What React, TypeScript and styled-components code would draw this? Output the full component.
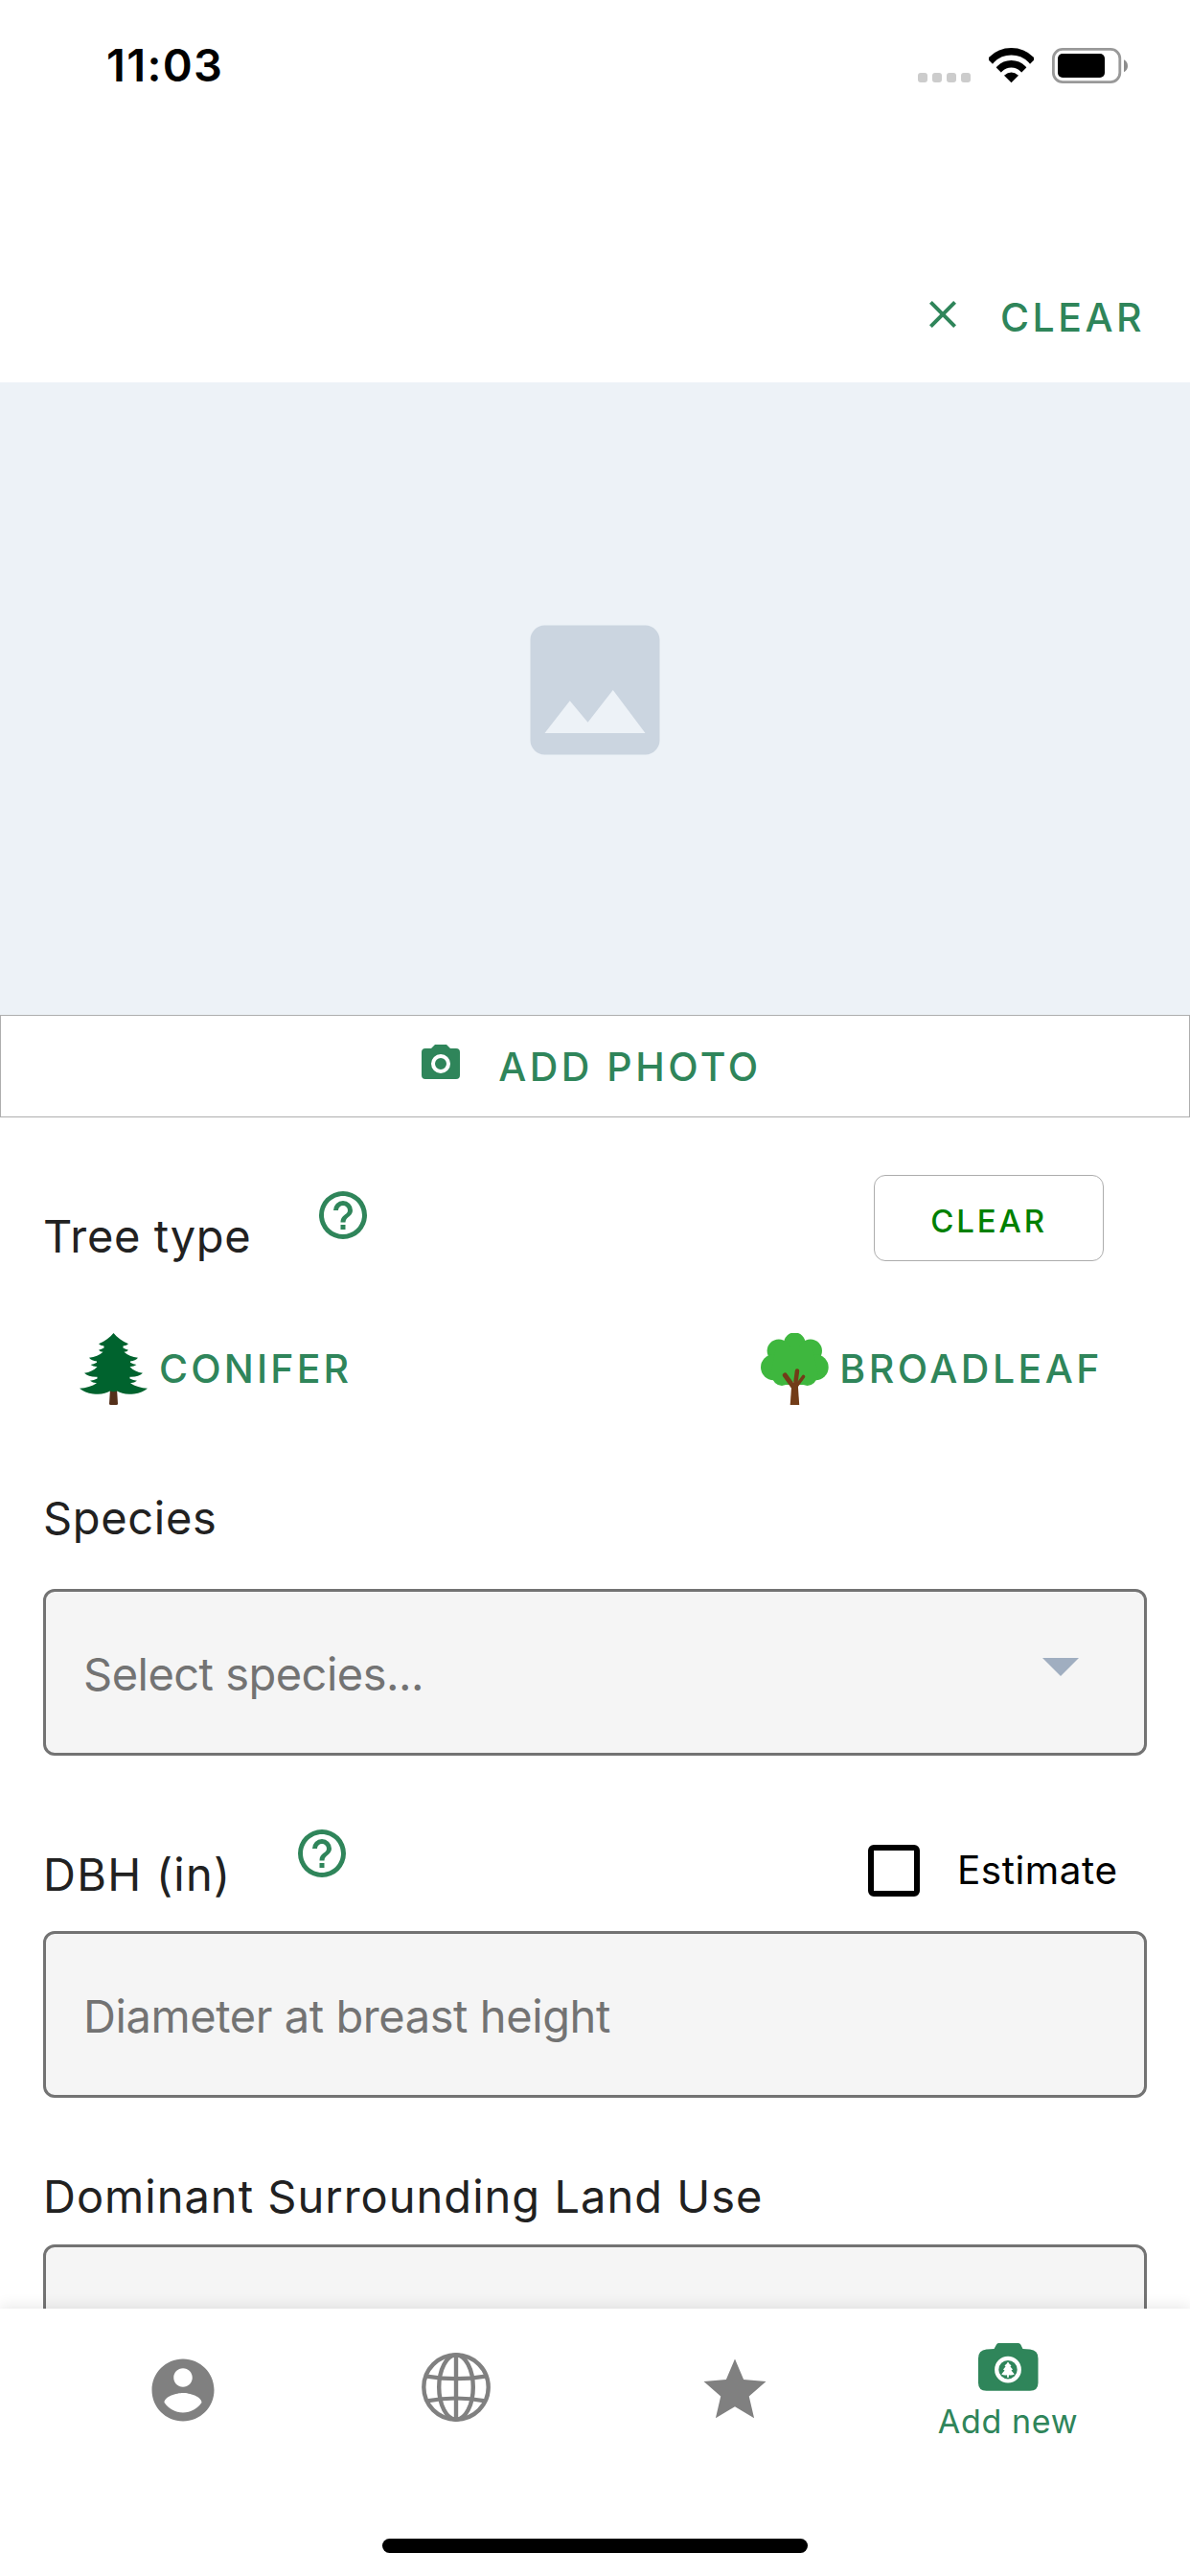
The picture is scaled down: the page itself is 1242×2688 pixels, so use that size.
import React from "react";
import styled, { createGlobalStyle } from "styled-components";

const green = "#2F855A";

const GlobalStyle = createGlobalStyle`
  * { box-sizing: border-box; }
  body {
    margin: 0;
    background: #fff;
    font-family: "Inter", "Liberation Sans", sans-serif;
  }
  svg { display: block; flex: none; }
`;

const Screen = styled.div`
  width: 1242px;
  height: 2688px;
  display: flex;
  flex-direction: column;
  background: #fff;
  overflow: hidden;
`;

const Content = styled.main`
  height: 2409px;
  flex: none;
  overflow: hidden;
`;

const StatusBar = styled.header`
  height: 136px;
  padding: 0 65px 0 111px;
  display: flex;
  justify-content: space-between;
  align-items: center;
`;

const Time = styled.span`
  font-size: 47px;
  font-weight: 600;
  line-height: 60px;
  letter-spacing: 1.32px;
  color: #000;
`;

const StatusIcons = styled.div`
  display: flex;
  align-items: flex-end;
  gap: 19px;
`;

const Signal = styled.div`
  display: flex;
  gap: 5px;
`;

const SignalDot = styled.span`
  width: 10px;
  height: 10px;
  margin-bottom: 1px;
  border-radius: 3px;
  background: #ccc;
`;

const TopBar = styled.div`
  height: 263px;
  padding: 168px 47px 0 0;
  display: flex;
  justify-content: flex-end;
  align-items: flex-start;
`;

const TextButton = styled.button<{ $gap?: number }>`
  border: 0;
  padding: 0;
  background: none;
  display: flex;
  align-items: flex-start;
  gap: ${(p) => p.$gap ?? 36}px;
  color: ${green};
  font-family: inherit;
`;

const ButtonLabel = styled.span<{ $spacing?: number }>`
  font-size: 41px;
  font-weight: 500;
  line-height: 54px;
  letter-spacing: ${(p) => p.$spacing ?? 3.48}px;
  white-space: nowrap;
`;

const PhotoPlaceholder = styled.div`
  height: 660px;
  padding: 231px 1px 0 0;
  display: flex;
  justify-content: center;
  align-items: flex-start;
  background: #edf2f7;
`;

const AddPhotoButton = styled(TextButton)`
  width: 100%;
  height: 107px;
  padding: 26px 11px 0 0;
  justify-content: center;
  border: 1px solid #aeaeae;
`;

const Form = styled.form`
  padding: 60px 45px 0;
`;

const Row = styled.div<{ $height: number; $top?: number }>`
  height: ${(p) => p.$height}px;
  margin-top: ${(p) => p.$top ?? 0}px;
  display: flex;
  align-items: flex-start;
`;

const Label = styled.label<{ $top: number; $spacing: number }>`
  display: block;
  margin-top: ${(p) => p.$top}px;
  font-size: 47px;
  line-height: 60px;
  letter-spacing: ${(p) => p.$spacing}px;
  color: #212121;
  white-space: nowrap;
`;

const TypeLabel = styled(Label)`
  width: 283px;
`;

const DbhLabel = styled(Label)`
  width: 261px;
`;

const HelpButton = styled.span<{ $top?: number }>`
  margin-top: ${(p) => p.$top ?? 0}px;
  color: ${green};
`;

const OutlineButton = styled.button`
  width: 240px;
  height: 90px;
  margin-left: auto;
  margin-right: 45px;
  padding: 6px 0 0;
  border: 1px solid #adadad;
  border-radius: 12px;
  background: none;
  color: #008000;
  font-family: inherit;
  font-size: 33px;
  font-weight: 500;
  line-height: 40px;
  letter-spacing: 2.84px;
`;

const TreeTypes = styled.div`
  height: 75px;
  margin-top: 75px;
  padding: 0 46px 0 38px;
  display: flex;
  justify-content: space-between;
`;

const TreeLabel = styled(ButtonLabel)`
  margin-top: 10px;
`;

const Field = styled.div<{ $top?: number }>`
  height: 174px;
  margin-top: ${(p) => p.$top ?? 0}px;
  padding: 0 68px 0 39px;
  display: flex;
  justify-content: space-between;
  align-items: center;
  border: 3px solid #737373;
  border-radius: 12px;
  background: #f5f5f5;
`;

const Placeholder = styled.span<{ $spacing: number }>`
  margin-top: 4px;
  font-size: 47px;
  line-height: 60px;
  letter-spacing: ${(p) => p.$spacing}px;
  color: #737373;
`;

const Chevron = styled.span`
  width: 0;
  height: 0;
  margin-bottom: 11px;
  border: 19px solid transparent;
  border-top-color: #a0aec0;
  border-bottom: 0;
`;

const Estimate = styled.label`
  margin: 21px 0 0 auto;
  width: 291px;
  display: flex;
  align-items: center;
  gap: 39px;
  font-size: 40.5px;
  line-height: 54px;
  letter-spacing: 0.52px;
  color: #000;
`;

const CheckBox = styled.span`
  width: 54px;
  height: 54px;
  flex: none;
  border: 6px solid #000;
  border-radius: 6px;
`;

const TabBar = styled.nav`
  position: relative;
  height: 279px;
  flex: none;
  display: flex;
  flex-direction: column;
  align-items: center;
  background: #fff;
  box-shadow: 0 -3px 14px rgba(0, 0, 0, 0.09);
`;

const Tabs = styled.div`
  width: 100%;
  height: 240px;
  padding-left: 48px;
  display: grid;
  grid-template-columns: 286px 284px 298px 272px;
`;

const Tab = styled.div<{ $top: number; $active?: boolean }>`
  padding-top: ${(p) => p.$top}px;
  display: flex;
  flex-direction: column;
  align-items: center;
  color: ${(p) => (p.$active ? green : "#808080")};
`;

const TabLabel = styled.span`
  margin-top: 12px;
  font-size: 34px;
  line-height: 40px;
  letter-spacing: 0.67px;
  white-space: nowrap;
`;

const HomeIndicator = styled.div`
  width: 444px;
  height: 15px;
  border-radius: 8px;
  background: #000;
`;

const Icon = ({ size, d }: { size: number; d: string }) => (
  <svg width={size} height={size} viewBox="0 0 24 24" fill="currentColor">
    <path d={d} />
  </svg>
);

const paths = {
  close:
    "M19,6.41L17.59,5L12,10.59L6.41,5L5,6.41L10.59,12L5,17.59L6.41,19L12,13.41L17.59,19L19,17.59L13.41,12L19,6.41Z",
  image:
    "M21 19V5c0-1.1-.9-2-2-2H5c-1.1 0-2 .9-2 2v14c0 1.1.9 2 2 2h14c1.1 0 2-.9 2-2zM8.5 13.5l2.5 3.01L14.5 12l4.5 6H5l3.5-4.5z",
  camera:
    "M4,4H7L9,2H15L17,4H20A2,2 0 0,1 22,6V18A2,2 0 0,1 20,20H4A2,2 0 0,1 2,18V6A2,2 0 0,1 4,4M12,7A5,5 0 0,0 7,12A5,5 0 0,0 12,17A5,5 0 0,0 17,12A5,5 0 0,0 12,7M12,9A3,3 0 0,1 15,12A3,3 0 0,1 12,15A3,3 0 0,1 9,12A3,3 0 0,1 12,9Z",
  help:
    "M11,18H13V16H11V18M12,2A10,10 0 0,0 2,12A10,10 0 0,0 12,22A10,10 0 0,0 22,12A10,10 0 0,0 12,2M12,20C7.59,20 4,16.41 4,12C4,7.59 7.59,4 12,4C16.41,4 20,7.59 20,12C20,16.41 16.41,20 12,20M12,6A4,4 0 0,0 8,10H10A2,2 0 0,1 12,8A2,2 0 0,1 14,10C14,12 11,11.75 11,15H13C13,12.75 16,12.5 16,10A4,4 0 0,0 12,6Z",
  account:
    "M12 2C6.48 2 2 6.48 2 12s4.48 10 10 10 10-4.48 10-10S17.52 2 12 2zm0 3c1.66 0 3 1.34 3 3s-1.34 3-3 3-3-1.34-3-3 1.34-3 3-3zm0 14.2c-2.5 0-4.71-1.28-6-3.22.03-1.99 4-3.08 6-3.08 1.99 0 5.97 1.09 6 3.08-1.29 1.94-3.5 3.22-6 3.22z",
  star:
    "M12,17.27L18.18,21L16.54,13.97L22,9.24L14.81,8.62L12,2L9.19,8.62L2,9.24L7.45,13.97L5.82,21L12,17.27Z",
};

const WifiIcon = () => (
  <svg width="47" height="37" viewBox="0 0 47 37">
    <defs>
      <clipPath id="wifi-fan">
        <path d="M23.5 36.2L-12 .7V-10H59V.7Z" />
      </clipPath>
    </defs>
    <g clipPath="url(#wifi-fan)" fill="none" stroke="#000">
      <circle cx="23.5" cy="33" r="29.2" strokeWidth="7.4" />
      <circle cx="23.5" cy="34" r="17.3" strokeWidth="7.4" />
      <circle cx="23.5" cy="35" r="9.6" fill="#000" stroke="none" />
    </g>
  </svg>
);

const BatteryIcon = () => (
  <svg width="79" height="37" viewBox="0 0 79 37">
    <rect x="1.4" y="1.4" width="69.4" height="34.2" rx="9.6" fill="none" stroke="#999" strokeWidth="2.8" />
    <rect x="6" y="6" width="49" height="25" rx="5" />
    <path d="M75 12.2C77.8 13.5 79 16 79 18.7S77.8 23.9 75 25.2Z" fill="#8c8c8c" />
  </svg>
);

const ConiferIcon = () => (
  <svg width="71" height="75" viewBox="0 0 71 75">
    <path d="M32 58H39L40 73.5Q40 75 38.5 75H32.5Q31 75 31 73.5Z" fill="#54301A" />
    <path
      fill="#00632E"
      d="M35.5 0C39 4.5 44.5 8.5 51 11.2Q49.5 13.2 45.5 13.6V15.6Q48 17.2 51 17.8Q49.5 19.6 46.5 19.8C50 23 55 25.2 61 25.8Q58.5 29 53 29.4V30.8Q56 32.6 59.5 33Q57 35 52.5 35.3C56 39 60.5 41 66 41.8Q61.5 46.2 52.5 45.8V47.4Q56 49.4 60 49.8Q57.5 52 53 52.3C58 55.6 64 57.4 71 57.7Q65.5 62.2 57 63.4C49 64.4 43.5 63.2 39 60.6Q35.5 61.8 32 60.6C27.5 63.2 22 64.4 14 63.4Q5.5 62.2 0 57.7C7 57.4 13 55.6 18 52.3Q13.5 52 11 49.8Q15 49.4 18.5 47.4V45.8Q9.5 46.2 5 41.8C10.5 41 15 39 18.5 35.3Q14 35 11.5 33Q15 32.6 18 30.8V29.4Q12.5 29 10 25.8C16 25.2 21 23 24.5 19.8Q21.5 19.6 20 17.8Q23 17.2 25.5 15.6V13.6Q21.5 13.2 20 11.2C26.5 8.5 32 4.5 35.5 0Z"
    />
  </svg>
);

const BroadleafIcon = () => (
  <svg width="71" height="75" viewBox="0 0 71 75">
    <g fill="#3EB73E">
      <circle cx="35.3" cy="10.6" r="11.2" />
      <circle cx="18.8" cy="18.6" r="12.2" />
      <circle cx="51.8" cy="18.6" r="12.2" />
      <circle cx="13.5" cy="35.8" r="13.5" />
      <circle cx="57.2" cy="35.8" r="13.5" />
      <circle cx="22" cy="45" r="10" />
      <circle cx="48.6" cy="45" r="10" />
      <path d="M16 14H54L60 44L50 54H40L35.3 50L30.5 54H20L10 44Z" />
    </g>
    <g fill="none" stroke="#723C18" strokeLinecap="round" strokeLinejoin="round">
      <path d="M25.3 44L34.3 56.5" strokeWidth="5" />
      <path d="M38 39.5L35.8 56" strokeWidth="4.5" />
      <path d="M44.5 45.5L36.8 56" strokeWidth="3.6" />
    </g>
    <path d="M32.2 54H38.8L40.2 75H30.7Z" fill="#723C18" />
  </svg>
);

const GlobeIcon = () => (
  <svg width="72" height="72" viewBox="0 0 72 72" fill="none" stroke="currentColor" strokeWidth="4.4">
    <circle cx="36" cy="36" r="33.7" />
    <path d="M36 2V70" />
    <ellipse cx="36" cy="36" rx="17.8" ry="33.7" />
    <path d="M5.5 24.6Q36 29.8 66.5 24.6M5.5 50.4Q36 44.6 66.5 50.4" strokeWidth="4.2" />
  </svg>
);

const TreeCameraIcon = () => (
  <svg width="64" height="50" viewBox="0 0 64 50">
    <path
      fill="currentColor"
      d="M22 0H43Q44.5 0 45.3 1.6L47.5 6L55 6.6Q63.5 7.4 63.5 16V41.5Q63.5 49.7 55 49.7H9.5Q1 49.7 1 41.5V16Q1 7.4 9.5 6.6L17.5 6L20 1.6Q20.7 0 22 0Z"
    />
    <circle cx="32" cy="27.7" r="11.8" fill="none" stroke="#fff" strokeWidth="4.2" />
    <path
      fill="#fff"
      d="M32 19.5Q33.3 22 35.5 23.3L34.5 24.5L37 27.5L35.5 28.5L38.8 32.5Q36 34 33 33.3L32.7 36H31.3L31 33.3Q28 34 25.2 32.5L28.5 28.5L27 27.5L29.5 24.5L28.5 23.3Q30.7 22 32 19.5Z"
    />
  </svg>
);

export default function App() {
  return (
    <>
      <GlobalStyle />
      <Screen>
        <Content>
          <StatusBar>
            <Time>11:03</Time>
            <StatusIcons>
              <Signal>
                <SignalDot />
                <SignalDot />
                <SignalDot />
                <SignalDot />
              </Signal>
              <WifiIcon />
              <BatteryIcon />
            </StatusIcons>
          </StatusBar>
          <TopBar>
            <TextButton>
              <Icon size={48} d={paths.close} />
              <ButtonLabel>CLEAR</ButtonLabel>
            </TextButton>
          </TopBar>
          <PhotoPlaceholder>
            <svg width="180" height="180" viewBox="0 0 24 24" fill="#CBD5E0">
              <path d={paths.image} />
            </svg>
          </PhotoPlaceholder>
          <AddPhotoButton>
            <Icon size={48} d={paths.camera} />
            <ButtonLabel>ADD PHOTO</ButtonLabel>
          </AddPhotoButton>
          <Form>
            <Row $height={90}>
              <TypeLabel $top={34} $spacing={0.65}>Tree type</TypeLabel>
              <HelpButton $top={12.4}>
                <Icon size={60} d={paths.help} />
              </HelpButton>
              <OutlineButton type="button">CLEAR</OutlineButton>
            </Row>
            <TreeTypes>
              <TextButton type="button" $gap={12}>
                <ConiferIcon />
                <TreeLabel $spacing={3.16}>CONIFER</TreeLabel>
              </TextButton>
              <TextButton type="button" $gap={11}>
                <BroadleafIcon />
                <TreeLabel $spacing={3.49}>BROADLEAF</TreeLabel>
              </TextButton>
            </TreeTypes>
            <Label $top={88} $spacing={0.67}>Species</Label>
            <Field $top={44}>
              <Placeholder $spacing={-0.52}>Select species...</Placeholder>
              <Chevron />
            </Field>
            <Row $height={111} $top={72}>
              <DbhLabel $top={22} $spacing={1.27}>DBH (in)</DbhLabel>
              <HelpButton>
                <Icon size={60} d={paths.help} />
              </HelpButton>
              <Estimate>
                <CheckBox />
                Estimate
              </Estimate>
            </Row>
            <Field>
              <Placeholder $spacing={-0.42}>Diameter at breast height</Placeholder>
            </Field>
            <Label $top={73} $spacing={1.01}>Dominant Surrounding Land Use</Label>
            <Field $top={20} />
          </Form>
        </Content>
        <TabBar>
          <Tabs>
            <Tab $top={46}>
              <Icon size={78} d={paths.account} />
            </Tab>
            <Tab $top={46}>
              <GlobeIcon />
            </Tab>
            <Tab $top={46}>
              <Icon size={78} d={paths.star} />
            </Tab>
            <Tab $top={36} $active>
              <TreeCameraIcon />
              <TabLabel>Add new</TabLabel>
            </Tab>
          </Tabs>
          <HomeIndicator />
        </TabBar>
      </Screen>
    </>
  );
}
